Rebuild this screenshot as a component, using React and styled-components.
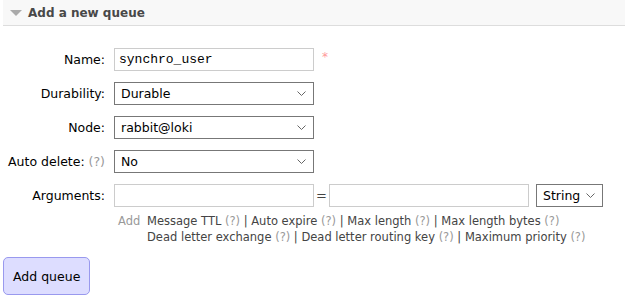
import styled, { createGlobalStyle } from 'styled-components';

const Global = createGlobalStyle`
	body {
		margin: 0;
		background: #fff;
		font-family: 'DejaVu Sans', Verdana, sans-serif;
		font-size: 12px;
		color: #000;
	}
`;

const Help = () => <HelpMark>(?)</HelpMark>;

const argLinks = [
	['Message TTL', 'Auto expire', 'Max length', 'Max length bytes'],
	['Dead letter exchange', 'Dead letter routing key', 'Maximum priority'],
];

export default () => (
	<>
		<Global />
		<Section>
			<Header>
				<Triangle />
				<h2>Add a new queue</h2>
			</Header>
			<Form>
				<Label>Name:</Label>
				<Cell>
					<TextInput $mono defaultValue='synchro_user' />
					<Required>*</Required>
				</Cell>

				<Label>Durability:</Label>
				<Cell>
					<Select defaultValue='durable'>
						<option value='durable'>Durable</option>
						<option value='transient'>Transient</option>
					</Select>
				</Cell>

				<Label>Node:</Label>
				<Cell>
					<Select defaultValue='loki'>
						<option value='loki'>rabbit@loki</option>
					</Select>
				</Cell>

				<Label>
					Auto delete: <Help />
				</Label>
				<Cell>
					<Select defaultValue='no'>
						<option value='no'>No</option>
						<option value='yes'>Yes</option>
					</Select>
				</Cell>

				<Label>Arguments:</Label>
				<Cell>
					<TextInput />
					<Equals>=</Equals>
					<TextInput />
					<Select $small defaultValue='string'>
						<option value='string'>String</option>
						<option value='number'>Number</option>
						<option value='boolean'>Boolean</option>
					</Select>
				</Cell>

				<span />
				<AddRow>
					<AddWord>Add</AddWord>
					<div>
						{argLinks.map((line, i) => (
							<LinkLine key={i}>
								{line.map((name, j) => (
									<span key={name}>
										{j > 0 && ' | '}
										{name} <Help />
									</span>
								))}
							</LinkLine>
						))}
					</div>
				</AddRow>
			</Form>
			<SubmitButton>Add queue</SubmitButton>
		</Section>
	</>
);

const chevron = `url("data:image/svg+xml,%3Csvg xmlns='http://www.w3.org/2000/svg' width='9' height='5' viewBox='0 0 9 5'%3E%3Cpath d='M0.5 0.5 L4.5 4.5 L8.5 0.5' fill='none' stroke='%23666' stroke-width='1'/%3E%3C/svg%3E")`;

const Section = styled.div`
	width: 625px;
	height: 301px;
	overflow: hidden;
`;

const Header = styled.div`
	display: flex;
	align-items: center;
	margin-left: 3px;
	height: 26px;
	background: #f8f8f8;
	border-bottom: 1px solid #ddd;
	box-sizing: border-box;

	h2 {
		margin: 0;
		font-size: 12px;
		font-weight: bold;
		color: #484848;
	}
`;

const Triangle = styled.span`
	width: 0;
	height: 0;
	margin: 1px 6px 0 7px;
	border-left: 6px solid transparent;
	border-right: 6px solid transparent;
	border-top: 6px solid #aaa;
`;

const Form = styled.div`
	display: grid;
	grid-template-columns: 105px auto;
	column-gap: 9px;
	row-gap: 11px;
	padding-top: 22px;
	align-items: center;
`;

const Label = styled.label`
	text-align: right;
	font-size: 12.5px;
	white-space: nowrap;
`;

const Cell = styled.div`
	display: flex;
	align-items: center;
`;

const TextInput = styled.input`
	box-sizing: border-box;
	width: 200px;
	height: 23px;
	padding: 1px 4px;
	border: 1px solid #ccc;
	background: #fff;
	font-family: ${({ $mono }) => ($mono ? "'Liberation Mono', monospace" : "'DejaVu Sans', sans-serif")};
	font-size: 13px;
	outline: none;
`;

const Select = styled.select`
	box-sizing: border-box;
	width: ${({ $small }) => ($small ? '67px' : '200px')};
	height: 23px;
	margin-left: ${({ $small }) => ($small ? '7px' : '0')};
	padding: 0 20px 0 6px;
	border: 1px solid #777;
	border-radius: 0;
	appearance: none;
	background: #fff ${chevron} no-repeat right 7px center;
	font-family: 'DejaVu Sans', sans-serif;
	font-size: 12.5px;
	color: #000;
	outline: none;
`;

const Required = styled.span`
	margin: -5px 0 0 8px;
	color: #f99;
	font-size: 12px;
`;

const Equals = styled.span`
	width: 15px;
	text-align: center;
	font-size: 13px;
	color: #444;
`;

const HelpMark = styled.span`
	color: #999;
`;

const AddRow = styled.div`
	display: flex;
	margin-top: -5px;
	padding-left: 4px;
	font-size: 11.5px;
	line-height: 16px;
	color: #444;
`;

const AddWord = styled.span`
	width: 29px;
	color: #999;
`;

const LinkLine = styled.div`
	white-space: nowrap;
`;

const SubmitButton = styled.button`
	display: block;
	margin: 12px 0 0 3px;
	padding: 0 9px;
	height: 38px;
	white-space: nowrap;
	background: #ddf;
	border: 1px solid #99e;
	border-radius: 5px;
	font-family: 'DejaVu Sans', sans-serif;
	font-size: 12.5px;
	color: #000;
`;
